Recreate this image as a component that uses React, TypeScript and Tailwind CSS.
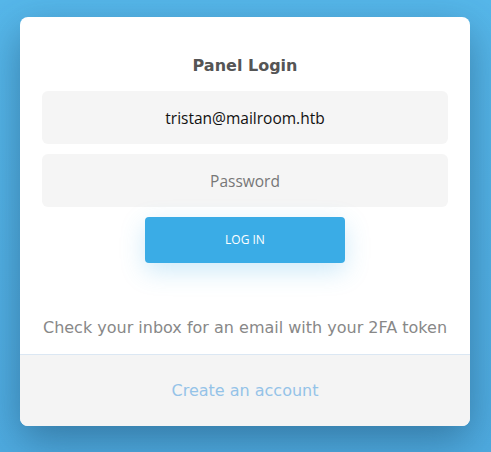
import React from "react";

const App = () => {
  return (
    <div className="w-[491px] h-[452px] bg-gradient-to-b from-[#56b7ea] to-[#4fabe0] pt-[17px] pl-[20px] overflow-hidden">
      <div className="w-[450px] h-[409px] bg-white rounded-lg shadow-[0_14px_40px_rgba(20,60,90,0.45)] flex flex-col overflow-hidden">
        <div className="flex-1 flex flex-col px-[22px] pt-[38px]">
          <h1 className="text-center text-[16px] leading-[21px] font-bold text-[#555] font-['DejaVu_Sans',sans-serif]">
            Panel Login
          </h1>
          <input
            className="mt-[15px] h-[53px] w-full rounded-md bg-[#f5f5f5] text-center text-[15.5px] text-[#111] font-['Open_Sans',sans-serif] outline-none"
            defaultValue="tristan@mailroom.htb"
          />
          <input
            type="password"
            placeholder="Password"
            className="mt-[10px] h-[53px] w-full rounded-md bg-[#f5f5f5] text-center text-[15.5px] text-[#111] placeholder:text-[#777] font-['Open_Sans',sans-serif] outline-none"
          />
          <button className="mx-auto mt-[10px] h-[46px] w-[200px] rounded bg-[#3aace6] text-white text-[12px] font-['Open_Sans',sans-serif] shadow-[0_8px_24px_rgba(58,172,230,0.25)]">
            LOG IN
          </button>
          <p className="mt-[54px] text-center text-[16px] leading-[21px] text-[#888] font-['DejaVu_Sans',sans-serif]">
            Check your inbox for an email with your 2FA token
          </p>
        </div>
        <div className="h-[72px] border-t border-[#dbe7f3] bg-[#f4f4f4] flex items-center justify-center">
          <a className="text-[16px] text-[#94c3e8] font-['DejaVu_Sans',sans-serif] cursor-pointer">
            Create an account
          </a>
        </div>
      </div>
    </div>
  );
};

export default App;
